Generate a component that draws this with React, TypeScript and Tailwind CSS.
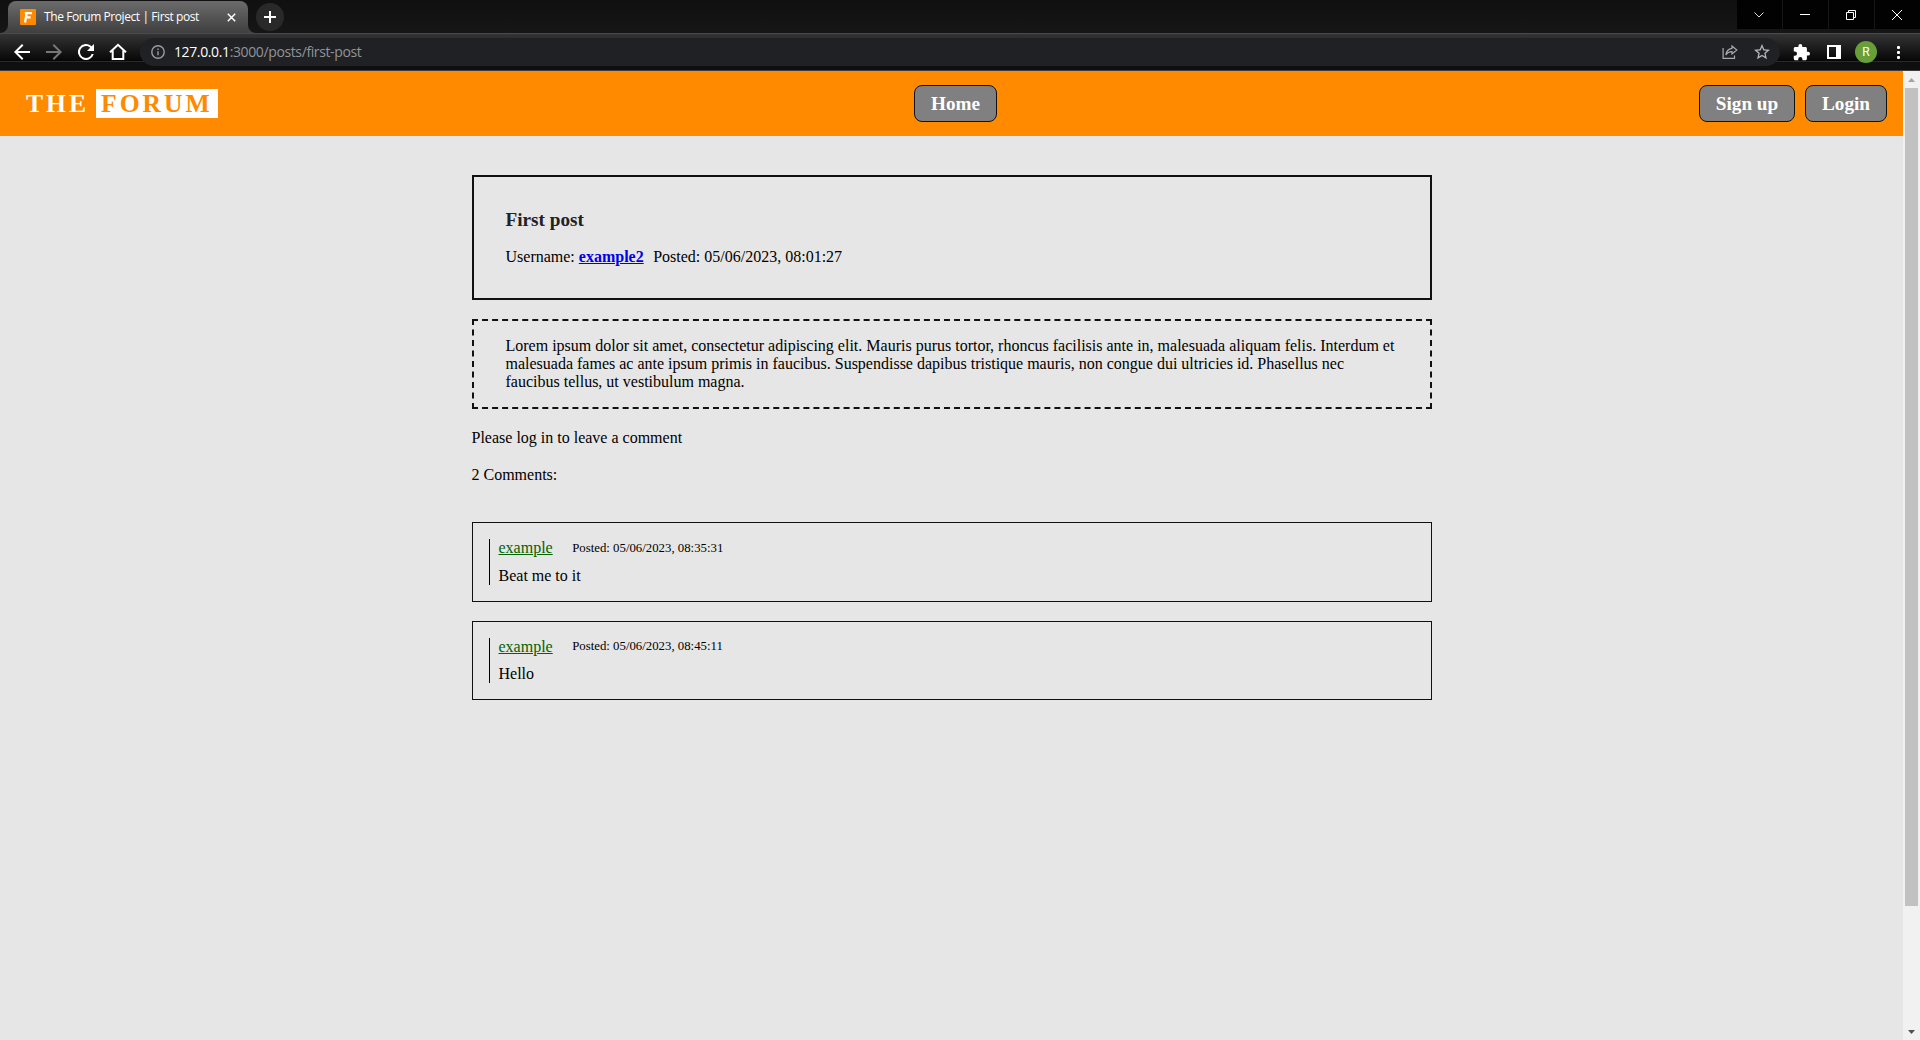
import React from "react";

const comments = [
  { user: "example", posted: "05/06/2023, 08:35:31", text: "Beat me to it", box: "mt-[38px] h-20", bar: "h-[46px]", row: "h-7", date: "mt-px" },
  { user: "example", posted: "05/06/2023, 08:45:11", text: "Hello", box: "mt-[19px] h-[79px]", bar: "h-[45px]", row: "h-[27px]", date: "mt-0" },
];

function Tab() {
  return (
    <div className="relative mt-px flex h-8 w-[240px] items-center rounded-t-lg bg-linear-to-b from-[#6c6c6c] to-[#3f3f3f] pl-3">
      <svg className="absolute bottom-0 -left-2 h-2 w-2" viewBox="0 0 8 8">
        <path d="M8 0v8H0a8 8 0 0 0 8-8" fill="#434343" />
      </svg>
      <svg className="absolute -right-2 bottom-0 h-2 w-2" viewBox="0 0 8 8">
        <path d="M0 0v8h8a8 8 0 0 1-8-8" fill="#434343" />
      </svg>
      <svg className="h-4 w-4" viewBox="0 0 16 16">
        <rect width="16" height="16" rx="1" fill="#ff8a00" />
        <path d="M4.800 4.100H12M6.700 4L5 13.500M5.800 8.300h4.800" stroke="#fff" strokeWidth="2.300" fill="none" />
      </svg>
      <span className="ml-2 w-[163px] whitespace-nowrap font-['Open_Sans',sans-serif] text-[12px] tracking-[-0.42px] text-white">
        The Forum Project | First post
      </span>
      <svg className="ml-[20px] h-[9px] w-[9px]" viewBox="0 0 9 9">
        <path d="M.8.8l7.400 7.400M8.200.8L.8 8.200" stroke="#fff" strokeWidth="1.500" />
      </svg>
    </div>
  );
}

function WindowControls() {
  return (
    <div className="ml-auto flex h-[29px] gap-px bg-[#161616] text-white">
      <div className="flex w-[45px] items-center justify-center bg-[#020202] pr-[2px]">
        <svg width="10" height="6" viewBox="0 0 10 6" fill="none"><path d="M.5.5L5 5 9.500.5" stroke="#ddd" /></svg>
      </div>
      <div className="flex w-[45px] items-center justify-center bg-[#020202] pr-[2px]">
        <div className="h-px w-[10px] bg-white" />
      </div>
      <div className="flex w-[45px] items-center justify-center bg-[#020202] pr-[2px]">
        <svg width="10" height="10" viewBox="0 0 10 10" fill="none" stroke="#fff"><path d="M.5 2.500h7v7h-7zM2.500 2.500v-2h7v7h-2" /></svg>
      </div>
      <div className="flex w-[45px] items-center justify-center bg-[#020202] pr-[2px]">
        <svg width="10" height="10" viewBox="0 0 10 10" stroke="#fff"><path d="M0 0l10 10M10 0L0 10" /></svg>
      </div>
    </div>
  );
}

function Toolbar() {
  return (
    <div className="relative flex h-[38px] items-center border-t border-b border-t-[#4a4a4a] border-b-[#3c3c40] bg-[linear-gradient(#343434_0px,#060606_27px,#2a2a2a_27px,#2a2a2a_28px,#0f0f0f_28px)] pl-[14px]">
      <svg className="mr-[16px]" width="16" height="16" viewBox="4 4 16 16"><path d="M20 11H7.830l5.590-5.590L12 4l-8 8 8 8 1.410-1.410L7.830 13H20z" fill="#fff" /></svg>
      <svg className="mr-[16px]" width="16" height="16" viewBox="4 4 16 16"><path d="M12 4l-1.410 1.410L16.170 11H4v2h12.170l-5.580 5.590L12 20l8-8z" fill="#777" /></svg>
      <svg className="mr-[15px]" width="16" height="16" viewBox="4 4 16 16"><path d="M17.650 6.350A8 8 0 1 0 19.730 14h-2.080A6 6 0 1 1 12 6c1.660 0 3.140.690 4.220 1.780L13 11h7V4z" fill="#fff" /></svg>
      <svg className="mr-[13px]" width="18" height="18" viewBox="0 0 18 18"><path d="M1 9.300L9 1.800l8 7.500M3.700 7.500V16h10.600V7.500" fill="none" stroke="#fff" strokeWidth="2" /></svg>
      <div className="flex h-7 w-[1640px] items-center rounded-full bg-[#202124] pr-[10px] pl-[11px]">
        <svg width="14" height="14" viewBox="0 0 14 14"><circle cx="7" cy="7" r="6.200" fill="none" stroke="#9a9da1" strokeWidth="1.400" /><path d="M6.300 6.300h1.400v4H6.300zM6.300 3.500h1.400v1.500H6.300z" fill="#9a9da1" /></svg>
        <span className="ml-[9px] whitespace-nowrap font-['Open_Sans',sans-serif] text-[14px] tracking-[-0.38px] text-[#919497]">
          <span className="text-white">127.0.0.1</span>:3000/posts/first-post
        </span>
        <svg className="ml-auto" width="16" height="16" viewBox="0 0 16 16" fill="none" stroke="#a8abae" strokeWidth="1.200"><path d="M1.100 4v10.400h11.400v-2.800M10 2l4.800 4L10 10V7.700C7.500 7.700 5.300 8.500 3.900 11c.3-3.500 2.300-6.200 6.100-6.700z" /></svg>
        <svg className="ml-[16px]" width="16" height="16" viewBox="2 2 20 20"><path d="M22 9.240l-7.190-.620L12 2 9.190 8.630 2 9.240l5.460 4.730L5.820 21 12 17.270 18.180 21l-1.630-7.030L22 9.240zM12 15.400l-3.760 2.270 1-4.280-3.320-2.880 4.380-.380L12 6.100l1.710 4.040 4.380.380-3.320 2.880 1 4.280L12 15.400z" fill="#b4b6b9" /></svg>
      </div>
      <svg className="ml-[13px]" width="17" height="17" viewBox="1 1 22 22"><path d="M20.500 11H19V7c0-1.100-.900-2-2-2h-4V3.500a2.500 2.500 0 0 0-5 0V5H4c-1.100 0-1.990.900-1.990 2v3.800H3.500a2.700 2.700 0 0 1 0 5.400H2V20c0 1.100.900 2 2 2h3.800v-1.500a2.700 2.700 0 0 1 5.400 0V22H17c1.100 0 2-.900 2-2v-4h1.500a2.500 2.500 0 0 0 0-5z" fill="#fff" /></svg>
      <div className="ml-[17px] h-[14px] w-[14px] border-2 border-r-[5px] border-white" />
      <div className="ml-[14px] flex h-[22px] w-[22px] items-center justify-center rounded-full bg-[#689f38] font-['Roboto',sans-serif] text-[12px] text-white">R</div>
      <div className="ml-[20px] flex flex-col gap-[2px]">
        <div className="h-[3px] w-[3px] rounded-[1px] bg-white" />
        <div className="h-[3px] w-[3px] rounded-[1px] bg-white" />
        <div className="h-[3px] w-[3px] rounded-[1px] bg-white" />
      </div>
    </div>
  );
}

function NavButton({ label, size }: { label: string; size: string }) {
  return (
    <button className={`flex h-[37px] items-center justify-center rounded-lg border border-[#111] bg-[#808080] text-[19.2px] font-bold text-white ${size}`}>
      {label}
    </button>
  );
}

export default function App() {
  return (
    <div className="flex h-[1040px] w-[1920px] flex-col overflow-hidden bg-[#e6e6e6] font-['Liberation_Serif',serif] text-base leading-[18px] text-black">
      <div className="flex h-[33px] shrink-0 bg-linear-to-b from-[#101010] to-[#161616] pl-2">
        <Tab />
        <div className="mt-[3px] ml-[8px] flex h-7 w-7 items-center justify-center rounded-full bg-[#292929]">
          <svg width="12" height="12" viewBox="0 0 12 12"><path d="M6 0v12M0 6h12" stroke="#fff" strokeWidth="2" /></svg>
        </div>
        <WindowControls />
      </div>
      <Toolbar />
      <div className="flex min-h-0 flex-1">
        <div className="w-[1903px]">
          <header className="flex h-[65px] items-center bg-[#ff8a00]">
            <div className="ml-[26px] flex w-[888px] items-center text-[25.6px] leading-[29px] font-bold tracking-[3px] text-white">
              <span className="w-[70px]">THE</span>
              <span className="h-[29px] w-[122px] bg-white pl-[5px] text-[#ff8a00]">FORUM</span>
            </div>
            <NavButton label="Home" size="w-[83px]" />
            <div className="ml-auto flex gap-[10px] pr-4">
              <NavButton label="Sign up" size="w-24" />
              <NavButton label="Login" size="w-[82px]" />
            </div>
          </header>
          <main className="mt-[39px] ml-[471.5px] w-[960px]">
            <section className="h-[125px] border-2 border-[#111] px-8 pt-[32px]">
              <h1 className="text-[19.2px] leading-[22px] font-bold text-[#222]">First post</h1>
              <p className="mt-[17px] whitespace-nowrap">
                Username: <a className="font-bold text-[#0000ee] underline">example2</a>
                <span className="ml-[9.5px]">Posted: 05/06/2023, 08:01:27</span>
              </p>
            </section>
            <p className="mt-[19px] h-[90px] border-2 border-dashed border-[#111] px-8 py-4">
              Lorem ipsum dolor sit amet, consectetur adipiscing elit. Mauris purus tortor, rhoncus facilisis ante in, malesuada aliquam felis. Interdum et malesuada fames ac ante ipsum primis in faucibus. Suspendisse dapibus tristique mauris, non congue dui ultricies id. Phasellus nec faucibus tellus, ut vestibulum magna.
            </p>
            <p className="mt-5">Please log in to leave a comment</p>
            <p className="mt-[19px]">2 Comments:</p>
            {comments.map((c) => (
              <article key={c.posted} className={`border border-[#111] p-4 ${c.box}`}>
                <div className={`border-l border-black pl-[9px] ${c.bar}`}>
                  <div className={`flex items-start ${c.row}`}>
                    <a className="text-[#006400] underline">{c.user}</a>
                    <span className={`ml-[19.5px] text-[12.8px] leading-4 ${c.date}`}>Posted: {c.posted}</span>
                  </div>
                  <p>{c.text}</p>
                </div>
              </article>
            ))}
          </main>
        </div>
        <div className="flex w-[17px] flex-col items-center bg-[#f1f1f1]">
          <div className="flex h-[17px] items-center justify-center"><svg width="7" height="4" viewBox="0 0 7 4"><path d="M0 4h7L3.500 0z" fill="#a3a3a3" /></svg></div>
          <div className="h-[818px] w-[13px] bg-[#c1c1c1]" />
          <div className="mt-auto flex h-[17px] items-center justify-center"><svg width="7" height="4" viewBox="0 0 7 4"><path d="M0 0h7L3.500 4z" fill="#505050" /></svg></div>
        </div>
      </div>
    </div>
  );
}
